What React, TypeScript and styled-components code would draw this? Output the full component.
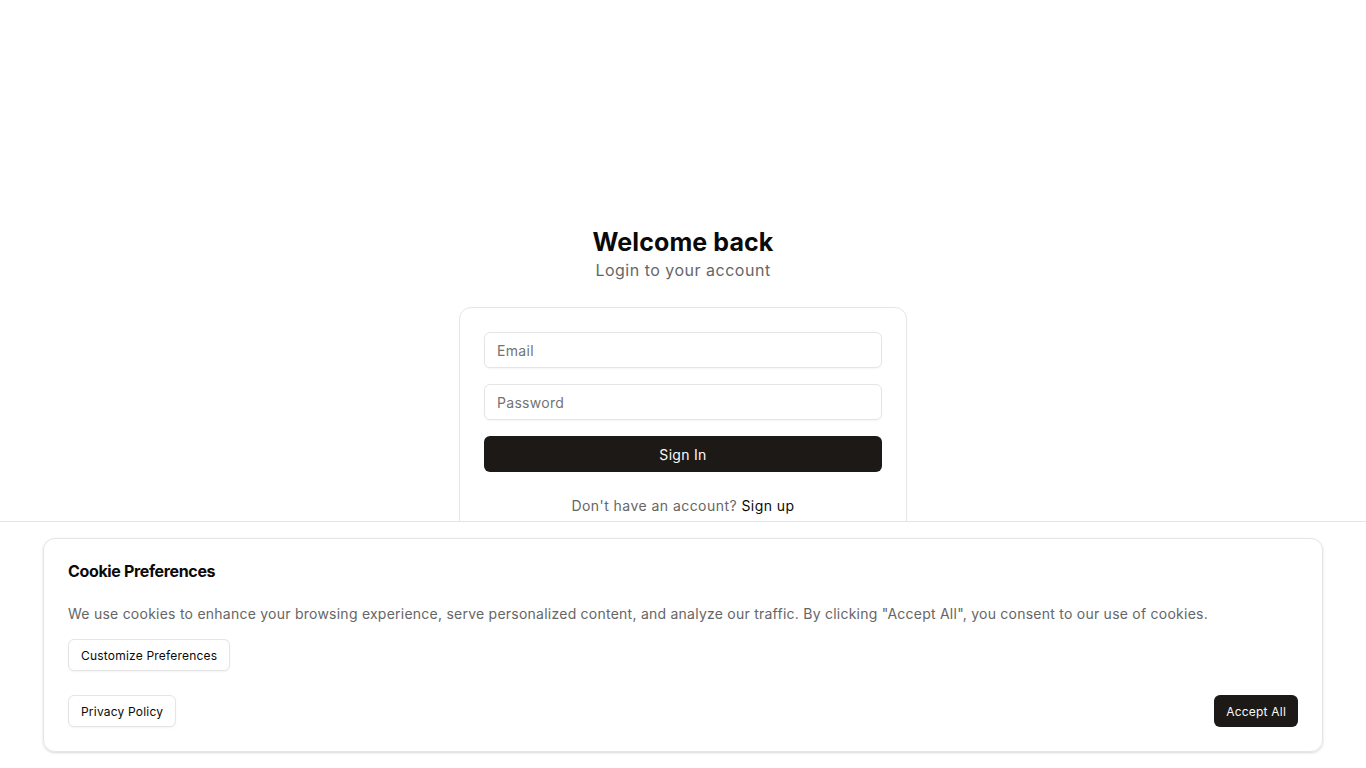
import React from "react";
import styled, { createGlobalStyle } from "styled-components";

const GlobalStyle = createGlobalStyle`
  * { box-sizing: border-box; }
  body {
    margin: 0;
    background: #fff;
    font-family: Inter, "Noto Sans", sans-serif;
    color: #0a0a0a;
  }
`;

const Page = styled.main`
  min-height: 768px;
  display: flex;
  flex-direction: column;
  align-items: center;
  padding-top: 226px;
`;

const Title = styled.h1`
  margin: 0;
  font-size: 25px;
  line-height: 32px;
  font-weight: 700;
  letter-spacing: 0.1px;
`;

const Subtitle = styled.p`
  margin: 0 0 25px;
  font-size: 16px;
  line-height: 24px;
  color: #666;
  letter-spacing: 0.5px;
`;

const Card = styled.div`
  width: 448px;
  border: 1px solid #e5e5e5;
  border-radius: 12px;
  padding: 24px;
  display: flex;
  flex-direction: column;
  gap: 16px;
`;

const Input = styled.input`
  height: 36px;
  border: 1px solid #e5e5e5;
  border-radius: 6px;
  padding: 0 12px;
  font: inherit;
  font-size: 14px;
  letter-spacing: 0.3px;
  box-shadow: 0 1px 2px rgba(0, 0, 0, 0.04);
  &::placeholder { color: #737373; }
`;

const PrimaryButton = styled.button<{ $small?: boolean }>`
  height: ${(p) => (p.$small ? "32px" : "36px")};
  padding: 0 ${(p) => (p.$small ? "12px" : "16px")};
  border: none;
  border-radius: 6px;
  background: #1c1917;
  color: #fafafa;
  font: inherit;
  font-size: ${(p) => (p.$small ? "12px" : "14px")};
  letter-spacing: ${(p) => (p.$small ? "0.2px" : "0.3px")};
`;

const FooterText = styled.p`
  margin: 8px 0 0;
  text-align: center;
  font-size: 14px;
  line-height: 20px;
  color: #666;
  letter-spacing: 0.45px;
  a { color: #0a0a0a; text-decoration: none; }
`;

const Overlay = styled.div`
  position: fixed;
  left: 0;
  right: 0;
  bottom: 0;
  background: #fff;
  border-top: 1px solid #e5e5e5;
  padding: 16px 43px;
`;

const Banner = styled.section`
  max-width: 1280px;
  margin: 0 auto;
  border: 1px solid #e5e5e5;
  border-radius: 12px;
  box-shadow: 0 1px 3px rgba(0, 0, 0, 0.1), 0 1px 2px rgba(0, 0, 0, 0.06);
  padding: 24px;
  display: flex;
  flex-direction: column;
`;

const BannerTitle = styled.h2`
  margin: 0 0 25px;
  font-size: 16px;
  line-height: 16px;
  font-weight: 700;
  letter-spacing: -0.35px;
`;

const BannerText = styled.p`
  margin: 0 0 15px;
  font-size: 14px;
  line-height: 20px;
  color: #666;
  letter-spacing: 0.24px;
`;

const Actions = styled.div`
  display: flex;
  justify-content: space-between;
  align-items: center;
  margin-top: 24px;
`;

const OutlineButton = styled.button`
  align-self: flex-start;
  height: 32px;
  padding: 0 12px;
  border: 1px solid #e5e5e5;
  border-radius: 6px;
  background: #fff;
  color: #0a0a0a;
  font: inherit;
  font-size: 12px;
  letter-spacing: 0.2px;
  box-shadow: 0 1px 2px rgba(0, 0, 0, 0.05);
`;

export default function App() {
  return (
    <>
      <GlobalStyle />
      <Page>
        <Title>Welcome back</Title>
        <Subtitle>Login to your account</Subtitle>
        <Card>
          <Input placeholder="Email" />
          <Input type="password" placeholder="Password" />
          <PrimaryButton>Sign In</PrimaryButton>
          <FooterText>
            Don't have an account? <a href="#">Sign up</a>
          </FooterText>
        </Card>
      </Page>
      <Overlay>
        <Banner>
          <BannerTitle>Cookie Preferences</BannerTitle>
          <BannerText>
            We use cookies to enhance your browsing experience, serve personalized content, and analyze our traffic. By
            clicking "Accept All", you consent to our use of cookies.
          </BannerText>
          <OutlineButton>Customize Preferences</OutlineButton>
          <Actions>
            <OutlineButton>Privacy Policy</OutlineButton>
            <PrimaryButton $small>Accept All</PrimaryButton>
          </Actions>
        </Banner>
      </Overlay>
    </>
  );
}
